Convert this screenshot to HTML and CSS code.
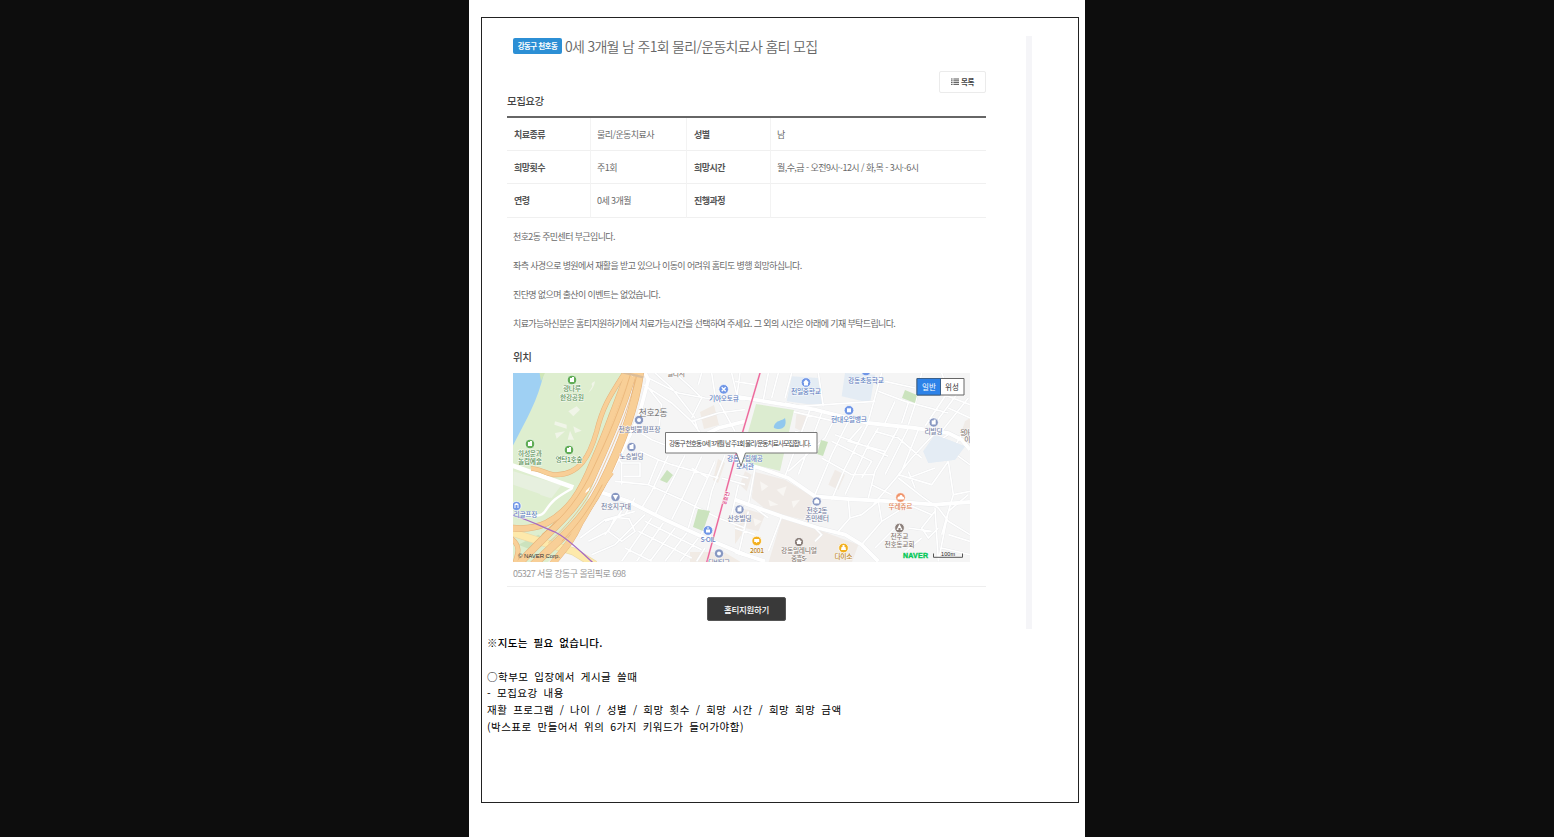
FILE: index.html
```html
<!DOCTYPE html>
<html lang="ko">
<head>
<meta charset="utf-8">
<title>홈티 모집</title>
<link rel="stylesheet" href="styles.css">
</head>
<body>
<main class="page">
<div class="frame">
  <div class="sheet">
    <div class="content">
      <header class="title-row"><span class="badge">강동구 천호동</span><h1>0세 3개월 남 주1회 물리/운동치료사 홈티 모집</h1></header>
      <div class="tools"><button class="list-btn"><svg width="8" height="7" viewBox="0 0 8 7"><path d="M0 1h1.6M2.4 1H8M0 2.8h1.6M2.4 2.8H8M0 4.6h1.6M2.4 4.6H8M0 6.4h1.6M2.4 6.4H8" stroke="#555" stroke-width="1"/></svg>목록</button></div>
      <h2 class="summary-title">모집요강</h2>
      <div class="table">
        <b>치료종류</b><span>물리/운동치료사</span><b>성별</b><span>남</span>
        <b>희망횟수</b><span>주1회</span><b>희망시간</b><span>월,수,금 - 오전9시~12시 / 화,목 - 3시~6시</span>
        <b>연령</b><span>0세 3개월</span><b>진행과정</b><span></span>
      </div>
      <div class="body">
        <p>천호2동 주민센터 부근입니다.</p>
        <p>좌측 사경으로 병원에서 재활을 받고 있으나 이동이 어려워 홈티도 병행 희망하십니다.</p>
        <p>진단명 없으며 출산이 이벤트는 없었습니다.</p>
        <p>치료가능하신분은 홈티지원하기에서 치료가능시간을 선택하여 주세요. 그 외의 시간은 아래에 기재 부탁드립니다.</p>
      </div>
      <h2 class="place-title">위치</h2>
      <svg class="map" width="457" height="189" viewBox="513 373 457 189">
        <defs>
          <g id="alleys" fill="none">
            <path transform="translate(505 368) scale(.33333)" d="M430 30L520 75L600 90L720 95M415 50L500 105L560 160L590 200M450 15L500 60L570 150M510 15L560 60L590 90L560 150M590 15L580 50M620 15L630 80L690 190M680 15L700 100M400 190L440 215L490 235M430 60L470 110L460 190M560 160L640 135L720 125M570 160L580 190M330 260L350 285V350M350 285H405V325H355M405 250L460 275L430 350L330 340M460 275L500 290L640 330M430 350L530 395L640 450M540 262L470 400L450 440M590 265L530 395L500 455M630 280L570 415L550 480M660 262L620 370L590 500M490 262L440 370L410 420M560 300L610 330M390 390L360 440L300 460M225 510L300 455L390 430M250 520L310 490L330 448L372 452L390 490L350 520L310 490M260 560L330 530L420 440M440 450L350 580M475 465L395 580M510 480L435 580M545 495L480 580M580 510L525 580M600 540L575 580M400 490L560 570M420 460L590 545M360 540L440 580M640 450L720 480M650 330L720 350M610 520L625 475M700 350L680 440M670 265L720 300M370 400L300 500"/>
            <path transform="translate(735 368) scale(.33333)" d="M0 40L60 50M15 15L5 90M100 15L85 95M130 15L110 90M170 15L150 90M250 15L265 115M150 105L190 115L420 100M170 130L300 160M225 125L150 325M260 135L190 320M180 190L235 205M300 150L270 210L160 310M340 160L290 260L240 380M400 165L330 300L290 395M380 175L340 220L450 250M300 200L380 230L460 265M260 270L350 320L420 320M290 220L410 280L380 330M430 180L400 230L330 380M490 180L420 310L400 390M520 180L450 320M550 185L500 310L415 410M600 195L530 270L490 320M640 200L570 245M440 15L400 160M430 70L510 100L640 135M480 100L450 165M520 105L500 165M560 15L540 110L520 170M620 15L640 70L570 175M680 60L590 180M700 90L620 190M600 70L705 110M450 40L540 60M640 120L705 150M420 190L490 210L560 270M490 320L590 350L640 280M490 330L560 385L610 420L640 460L705 500M640 280L655 380L705 370M655 380L620 500M600 420L610 580M700 380L640 430L610 580M600 430L560 480L580 510L610 480M560 510L500 560M340 395L345 450L380 440L430 400M345 450L310 490M430 400L440 460L380 530M440 460L520 410L590 440M520 480L590 490M640 500L705 520M620 540L705 560M420 540L480 480M60 300L40 410M40 330L0 320M60 300L80 250M140 445L100 550M0 480L60 500M10 560L40 430M60 420L100 450M240 480L260 500L240 520M410 350L470 380M520 310L540 360M600 300L520 330M680 200L650 250L705 290"/>
          </g>
          <g id="streets" fill="none">
            <path transform="translate(505 368) scale(.33333)" d="M280 370L370 400L480 455L600 510L720 560M420 15L430 35L400 150L320 310M590 205L640 180L720 160"/>
            <path transform="translate(735 368) scale(.33333)" d="M0 85L60 95L240 125L400 165L540 180L640 195L680 215L705 245M0 275L60 295L160 330L240 385L340 393L470 400L600 410L705 402M0 395L40 410L140 445L250 480L330 500L380 530L430 580M0 550L90 580"/>
          </g>
          <path id="roadA" d="M362 10C310 90 292 120 275 190C255 260 225 325 145 320C120 316 100 300 78 302" fill="none"/>
          <path id="roadB" d="M372 10C335 100 310 180 265 280C225 380 190 430 125 465C90 482 60 484 20 480" fill="none"/>
          <path id="roadC" d="M386 10C350 130 305 230 260 330C215 430 130 490 40 590" fill="none"/>
          <path id="roadD" d="M405 10C390 130 335 260 290 350C240 450 180 500 85 590" fill="none"/>
          <path id="roadE" d="M318 312C280 360 260 410 225 465C200 520 180 540 140 590" fill="none"/>
          <path id="roadF" d="M20 512C48 535 40 555 28 590" fill="none"/>
          <path id="bldg" d="M-2 2v-4h2v-1h2v5zM-1 0h1" fill="#fff"/>
        </defs>
        <rect x="513" y="373" width="457" height="189" fill="#f5f5f5"/>
        <g transform="translate(735 368) scale(.33333)">
          <path d="M60 312L150 335L240 390L205 455L100 430L50 390zM140 452L250 485L370 530L350 585H100zM0 420L40 425L90 440L70 490L30 480zM30 310L50 320L35 370L15 350zM185 130L220 140L200 190L180 180zM300 305L330 320L310 365L280 350zM690 160L705 150V220L680 190z" fill="#f0ebe7"/>
          <path d="M75 340L100 355L80 370zM125 365L155 355L145 385zM170 400L195 395L175 420zM100 395L130 410L105 415zM55 450L80 460L60 475z" fill="#f8f6f3"/>
          <path d="M170 25L250 30L265 115L155 100zM330 15L420 20L405 105L320 85zM600 200L690 235L660 275L580 285L565 250z" fill="#e4ecf4"/>
        </g>
        <path d="M700 412l14-7 5 20 -15 4zM718 459l7 4 -7 20 -5-3zM735 526l8-4 -1 12 -7 10zM690 552h34l20 12h-54z" fill="#f1ebe5"/>
        <use href="#alleys" stroke="#e7e8ea" stroke-width="7.2"/>
        <use href="#streets" stroke="#e7e8ea" stroke-width="13.500"/>
        <use href="#alleys" stroke="#fff" stroke-width="5"/>
        <use href="#streets" stroke="#fff" stroke-width="11.500"/>
        <path d="M756 404l38 6 -14 61 -40-10z" fill="#dcecd0"/>
        <path d="M905 390l12 5 -2 8 -13-5zM821 440l7 2 -5 14 -6-2zM667 470l6 5 -6 8 -7-3zM698 509l12 2 -7 20 -10-4z" fill="#cbe3be"/>
        <path d="M774 426c2-6 8-5 11-8c2 7-1 11-6 11c-4 0-6-1-5-3z" fill="#91c8ee"/>
        <g transform="translate(735 368) scale(.33333)"><path d="M600 200L690 235L660 275L580 285L565 250z" fill="#e4ecf4"/></g>
        <g transform="translate(505 368) scale(.33333)">
          <path d="M20 10H395L300 250L205 515L120 590H20z" fill="#deeecf"/>
          <path d="M20 10H118C98 100 66 150 20 240z" fill="#9fd0f3"/>
          <path d="M103 10H122L108 40z" fill="#cfe6b7"/>
          <path d="M25 310L60 320L170 350L140 390L25 350zM110 360L145 370L135 390L105 380z" fill="#e7f0df"/>
          <path d="M345 70L310 140L290 230L265 275L320 150zM100 500L130 520L90 550L40 530z" fill="#cbe2bd"/>
          <path d="M20 292L205 358" fill="none" stroke="#fff" stroke-width="14"/>
          <path d="M200 362C150 390 140 400 120 430C110 445 90 445 60 443" fill="none" stroke="#fff" stroke-width="7"/>
          <path d="M190 130L215 115L225 125L205 145zM150 160L185 170V182L148 170zM150 195L180 190L155 212zM195 188L207 215L188 215zM205 175L230 188L210 195zM250 75Q268 60 270 40Q255 45 262 55z" fill="#f0f5e8"/>
          <path d="M20 493L130 528L205 550L270 590" fill="none" stroke="#ead9a8" stroke-width="24"/>
          <path d="M20 493L130 528L205 550L270 590" fill="none" stroke="#fde9ab" stroke-width="20"/>
          <g stroke="#e5b27a"><use href="#roadF" stroke-width="15"/><use href="#roadA" stroke-width="15"/><use href="#roadB" stroke-width="20"/><use href="#roadC" stroke-width="23"/><use href="#roadE" stroke-width="20"/><use href="#roadD" stroke-width="25"/></g>
          <g stroke="#f8cf97"><use href="#roadF" stroke-width="12"/><use href="#roadA" stroke-width="12"/><use href="#roadB" stroke-width="17"/><use href="#roadC" stroke-width="20"/><use href="#roadE" stroke-width="18"/><use href="#roadD" stroke-width="22"/></g>
          <path d="M376 20C345 125 310 205 265 300C230 380 175 450 110 500M396 20C370 130 320 240 275 340C240 410 190 470 130 525M292 350C255 420 220 470 170 520" fill="none" stroke="#e6ae70" stroke-width="2"/>
          <path d="M243 368l12-12 -4 12 -10 8zM376 18h8l-2 8z" fill="#fff"/>
          <path d="M350 12L415 28" stroke="#dcbd98" stroke-width="7"/>
          <path d="M20 440C70 455 120 480 150 492C190 512 220 545 268 588" fill="none" stroke="#a66ac3" stroke-width="4"/>
        </g>
        <path d="M760 373L735 458L706 565" fill="none" stroke="#f5a9c6" stroke-width="1.8"/>
        <path d="M760 373L735 458L706 565" fill="none" stroke="#ea6297" stroke-width="1"/>

        <g class="pin green" transform="translate(572 380)"><circle r="4.8"/><use href="#bldg"/></g>
        <g class="pin green" transform="translate(530 444)"><circle r="4.8"/><use href="#bldg"/></g>
        <g class="pin green" transform="translate(569 450)"><circle r="4.8"/><use href="#bldg"/></g>
        <g class="pin navy" transform="translate(639 420)"><circle r="4.6"/><circle r="2" class="dot"/></g>
        <g class="pin navy" transform="translate(631.500 447)"><circle r="4.6"/><use href="#bldg"/></g>
        <g class="pin navy" transform="translate(615.500 497)"><circle r="4.6"/><path class="dot" d="M-2.7-2h5.4L0 3z"/></g>
        <g class="pin blue" transform="translate(516.500 506)"><circle r="4.6"/><path class="dot" d="M-2 2v-4l2-1 2 1v4h-1v-3h-2v3z"/></g>
        <g class="pin blue" transform="translate(723.700 389.300)"><circle r="4.8"/><path d="M-2-2l4 4M2-2l-4 4" stroke="#fff" stroke-width="1.3"/></g>
        <g class="pin blue" transform="translate(806 382.500)"><circle r="4.8"/><path class="dot" d="M-3 0l3-3 3 3h-1v3h-4v-3z"/></g>
        <g class="pin blue" transform="translate(866 371)"><circle r="4.8"/></g>
        <g class="pin blue" transform="translate(849 410.300)"><circle r="4.8"/><path class="dot" d="M-2-2h4v4h-4z"/></g>
        <g class="pin navy" transform="translate(933.700 422.500)"><circle r="4.6"/><use href="#bldg"/></g>
        <g class="pin navy" transform="translate(739.500 509.500)"><circle r="4.6"/><use href="#bldg"/></g>
        <g class="pin blue" transform="translate(708 530.500)"><circle r="4.8"/><path class="dot" d="M-2-1h4v3h-4zM-1-3h2v1h-2z"/></g>
        <g class="pin navy" transform="translate(719 553.500)"><circle r="4.6"/><circle r="2" class="dot"/></g>
        <g class="pin navy" transform="translate(816.700 501.500)"><circle r="4.6"/><path class="dot" d="M-2.500-1l2.500-2 2.500 2v3h-5z"/></g>
        <g class="pin yellow" transform="translate(756.700 541)"><circle r="4.8"/><path class="dot" d="M-2.500-2h5v3h-2v1h-1v-1h-2z"/></g>
        <g class="pin yellow" transform="translate(843.500 548)"><circle r="4.8"/><path class="dot" d="M-2-1h4l.5 3h-5zM-1-3h2v2h-2z"/></g>
        <g class="pin gray" transform="translate(799 542)"><circle r="4.6"/><path class="dot" d="M-3 0l3-3 3 3h-1v2h-4v-2z"/></g>
        <g class="pin orange" transform="translate(900.500 497.500)"><circle r="4.8"/><path class="dot" d="M-3 1c0-2 1-2 2-2c0-2 3-2 3 0c2 0 2 3 1 3h-6z"/></g>
        <g class="pin gray" transform="translate(899.500 528)"><circle r="4.8"/><path class="dot" d="M0-4l1 2 2 4h-2v-2h-2v2h-2l2-4z"/></g>

        <g class="label greenish">
          <text x="572" y="391" textLength="18">광나루</text><text x="572" y="399.500" textLength="24">한강공원</text>
          <text x="530" y="455.500" textLength="24">하성운과</text><text x="530" y="463.500" textLength="24">놀랍예술</text>
          <text x="569" y="461.500" textLength="27">영탁1호숲</text>
        </g>
        <g class="label navyish">
          <text x="639.500" y="431.500" textLength="42">천호빗물펌프장</text><text x="631.500" y="458.500" textLength="24">노승빌딩</text><text x="616" y="508.500" textLength="30">천호지구대</text>
          <text x="933.500" y="434" textLength="18">리빌딩</text><text x="739.500" y="521" textLength="24">산호빌딩</text><text x="817" y="513" textLength="21">천호2동</text><text x="817" y="520.500" textLength="24">주민센터</text>
          <text x="719" y="564.500" textLength="22">다비타교</text>
        </g>
        <g class="label blueish">
          <text x="525.500" y="517" textLength="24">리골프장</text><text x="724" y="400.500" textLength="30">기아오토큐</text><text x="806" y="393.500" textLength="30">천일중학교</text><text x="866" y="382.500" textLength="36">강동초등학교</text><text x="849" y="421.500" textLength="36">현대오일뱅크</text>
          <text x="745" y="461" textLength="36">강동구립해공</text><text x="745" y="469" textLength="18">도서관</text><text x="708" y="541.500" textLength="15">S-OIL</text>
        </g>
        <g class="label brownish"><text x="676" y="375.500" textLength="18">빌리지</text><text x="799" y="553" textLength="36">강동밀레니얼</text><text x="799" y="560.500" textLength="16">중흥S-</text><text x="899.500" y="539" textLength="18">천주교</text><text x="899.500" y="547" textLength="30">천호동교회</text><text x="965" y="434.500" textLength="10">동아</text><text x="967.500" y="442">이</text></g>
        <g class="label orangeish"><text x="900.500" y="508.500" textLength="24">뚜레쥬르</text></g>
        <g class="label goldish"><text x="757" y="552.500" textLength="14">2001</text><text x="843.500" y="559" textLength="18">다이소</text></g>
        <text class="dong" x="653" y="415.500" textLength="29">천호2동</text>
        <text class="line-name" transform="translate(728 498.500) rotate(-75)" textLength="13">8호선</text>
        <text class="copyright" x="518" y="557.500" textLength="42">© NAVER Corp.</text>
        <text class="naver" x="903" y="557.500" textLength="25">NAVER</text>
        <text class="scale" x="948" y="556" textLength="14">100m</text>
        <path d="M933.500 553.500v3.800h29v-3.800" fill="none" stroke="#555" stroke-width="1"/>
        <path d="M665.500 432.500h151.500v20.500h-71.500l-4.500 13 -4.500-13h-71z" fill="#fff" stroke="#777"/>
        <text class="info" x="669" y="445.500" textLength="142">강동구 천호동 0세 3개월 남 주1회 물리/운동치료사모집합니다.</text>
        <path d="M917 378.500h47v16.500h-47z" fill="#fff" stroke="#666"/><path d="M917 378.500h23.500v16.500h-23.500z" fill="#2d82e8" stroke="#39608c"/>
        <text class="switch on" x="929" y="389.500">일반</text><text class="switch" x="952" y="389.500">위성</text>
      </svg>
      <div class="address">05327 서울 강동구 올림픽로 698</div>
      <div class="actions"><button class="apply">홈티지원하기</button></div>
    </div>
    <div class="strip"></div>
  </div>
  <div class="notes">
    <p class="strong">※지도는 필요 없습니다.</p>
    <p>&nbsp;</p>
    <p>○학부모 입장에서 게시글 쓸때</p>
    <p>- 모집요강 내용</p>
    <p>재활 프로그램 / 나이 / 성별 / 희망 횟수 / 희망 시간 / 희망 희망 금액</p>
    <p>(박스표로 만들어서 위의 6가지 키워드가 들어가야함)</p>
  </div>
</div>
</main>
</body>
</html>
```
FILE: styles.css
```css
* { box-sizing: border-box; }
body { margin: 0; background: #0d0d0d; font-family: "Noto Sans CJK KR", sans-serif; color: #6a6a6a; }
h1, h2, p { margin: 0; }
button { font-family: inherit; padding: 0; }
.page { width: 616px; height: 837px; margin: 0 auto; padding: 17px 6px 0 12px; background: #fff; }
.frame { width: 598px; height: 786px; border: 1px solid #222; overflow: hidden; }
.sheet { display: flex; height: 611px; padding: 17px 0 0 25px; }
.content { width: 479px; }
.strip { width: 6px; height: 593px; margin: 1px 0 0 40px; background: #f5f5f8; }
.title-row { display: flex; align-items: center; gap: 3px; height: 22px; padding-left: 6px; white-space: nowrap; }
.badge { width: 49px; height: 16px; border-radius: 2px; background: #2c8fd5; color: #fff; font-size: 7.5px; font-weight: 700; letter-spacing: -.55px; line-height: 15px; text-align: center; }
h1 { font-size: 14px; font-weight: 350; letter-spacing: -.69px; line-height: 20px; padding-bottom: 1px; color: #666; }
.tools { display: flex; justify-content: flex-end; margin-top: 14px; }
.list-btn { display: flex; align-items: center; justify-content: center; gap: 2px; width: 47px; height: 22px; padding-bottom: 1px; border: 1px solid #ebebeb; border-radius: 2px; background: #fff; color: #444; font-size: 7.5px; font-weight: 700; letter-spacing: -.4px; }
.summary-title, .place-title { color: #444; font-size: 10.5px; font-weight: 500; line-height: 16px; letter-spacing: -.5px; }
.summary-title { height: 23px; line-height: 15px; }
.table { display: grid; grid-template-columns: 83px 96px 84px 216px; grid-auto-rows: 33.2px; border-top: 2px solid #666; font-size: 9px; letter-spacing: -.57px; white-space: nowrap; }
.table > * { padding-left: 7px; line-height: 33px; border-bottom: 1px solid #f0f0f0; }
.table > :not(:nth-child(4n+1)) { border-left: 1px solid #f3f3f3; }
.table > :nth-child(even) { padding-left: 6px; }
.table b { font-weight: 700; color: #555; }
.body { padding: 4px 0 0 6px; font-size: 9px; letter-spacing: -.63px; white-space: nowrap; }
.body p { height: 29.2px; line-height: 29px; }
.place-title { margin: 11px 0 8px 6px; }
.map { display: block; margin-left: 6px; }
.address { height: 25px; padding-left: 6px; border-bottom: 1px solid #eee; color: #999; font-size: 9px; letter-spacing: -.58px; line-height: 24px; }
.actions { display: flex; justify-content: center; padding-top: 10.5px; }
.apply { width: 79px; height: 24px; margin-top: -.5px; border: 1px solid #555; border-radius: 2px; background: #393939; color: #fff; font-size: 8.5px; font-weight: 500; letter-spacing: -.3px; padding-bottom: 1px; }
.notes { padding: 5px 0 0 5px; color: #000; font-size: 10.5px; letter-spacing: .5px; word-spacing: 2.4px; white-space: nowrap; }
.notes p { height: 16.8px; line-height: 17px; }
.notes .strong { font-weight: 500; letter-spacing: .35px; }

.pin > circle:first-child { fill: currentColor; stroke: #fff; stroke-width: .7; }
.pin .dot { fill: #fff; }
.green { color: #62ad57; }
.navy { color: #8797c1; }
.blue { color: #7096e6; }
.yellow { color: #f2b01f; }
.gray { color: #8c807b; }
.orange { color: #ef936a; }
.label { font-size: 6.8px; font-weight: 500; text-anchor: middle; paint-order: stroke; stroke: rgba(255,255,255,.8); stroke-width: 1px; }
.greenish { fill: #5b915a; }
.navyish { fill: #7984a6; }
.blueish { fill: #6482c2; }
.brownish { fill: #8a7e78; }
.orangeish { fill: #df8356; }
.goldish { fill: #bd8420; }
.dong { font-size: 9px; fill: #777; text-anchor: middle; }
.line-name { font-size: 5.5px; font-weight: 700; fill: #e0578f; text-anchor: middle; paint-order: stroke; stroke: #fff; stroke-width: 1px; }
.copyright { font-family: "Liberation Sans", sans-serif; font-size: 6px; fill: #333; }
.naver { font-family: "Liberation Sans", sans-serif; font-size: 7px; font-weight: 700; fill: #05c858; stroke: #05c858; stroke-width: .4px; }
.scale { font-family: "Liberation Sans", sans-serif; font-size: 5.5px; fill: #222; text-anchor: middle; }
.info { font-size: 6.7px; fill: #444; }
.switch { font-size: 7.5px; fill: #333; text-anchor: middle; }
.switch.on { fill: #fff; }
```
